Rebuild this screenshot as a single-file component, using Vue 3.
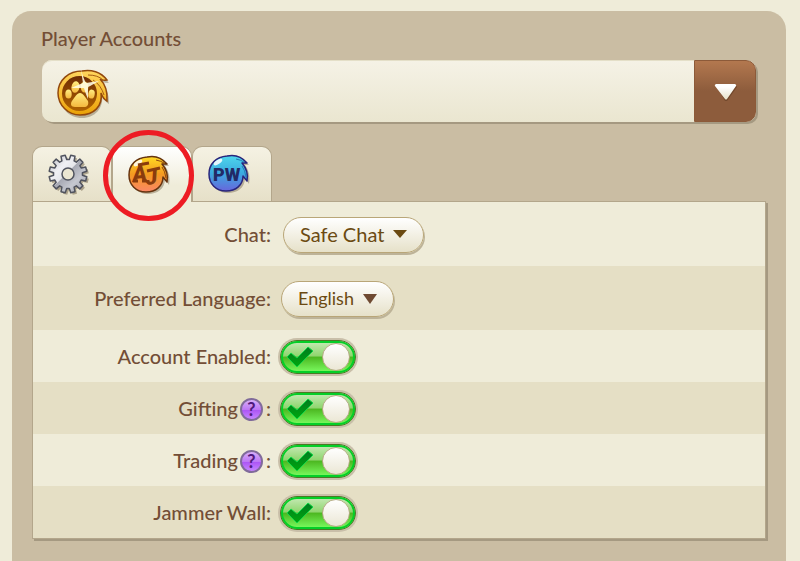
<script setup>
import { ref, reactive } from 'vue'

const activeTab = ref('aj')
const chat = ref('Safe Chat')
const language = ref('English')

const toggles = reactive([
  { id: 'enabled', label: 'Account Enabled', help: false, on: true },
  { id: 'gifting', label: 'Gifting', help: true, on: true },
  { id: 'trading', label: 'Trading', help: true, on: true },
  { id: 'wall', label: 'Jammer Wall', help: false, on: true }
])

function gearPath(cx, cy, outer, inner, teeth) {
  const step = (Math.PI * 2) / teeth
  const shape = [[-0.33, inner], [-0.22, outer], [0.22, outer], [0.33, inner]]
  const points = []
  for (let i = 0; i < teeth; i++) {
    for (const [offset, r] of shape) {
      const a = (i + 0.5 + offset) * step
      points.push(`${(cx + Math.cos(a) * r).toFixed(2)} ${(cy + Math.sin(a) * r).toFixed(2)}`)
    }
  }
  return `M${points.join('L')}Z`
}
const gear = gearPath(21, 22, 19, 14.5, 12)
</script>

<template>
  <main class="panel">
    <h1 class="title">Player Accounts</h1>

    <div class="account">
      <svg class="paw" width="54" height="52" viewBox="0 0 54 52" role="img" aria-label="Paw badge">
        <defs>
          <linearGradient id="pawRing" x1="0" y1="0" x2="0" y2="1">
            <stop offset="0" stop-color="#ffd55e" />
            <stop offset=".6" stop-color="#f6b92c" />
            <stop offset="1" stop-color="#e9a005" />
          </linearGradient>
          <linearGradient id="pawCore" x1="0" y1="0" x2="0" y2="1">
            <stop offset="0" stop-color="#6f2c04" />
            <stop offset="1" stop-color="#b06300" />
          </linearGradient>
          <linearGradient id="pawPad" x1="0" y1="0" x2="0" y2="1">
            <stop offset="0" stop-color="#ffed82" />
            <stop offset="1" stop-color="#f5b83e" />
          </linearGradient>
        </defs>
        <path d="M25 3C34 1 44 4 51 13Q47 13 44 12Q51 19 51 34Q47 32 44 25C46 38 37 48 24 48C11 48 2 38 2 25.500C2 12 12 3 25 3Z" fill="#776b51" opacity=".45" transform="translate(1 2)" />
        <path d="M25 3C34 1 44 4 50 12Q46 13 43 11Q51 19 50 33Q46 31 44 25C46 38 37 47 23 47C11 47 1 37 1 25C1 12 12 3 25 3Z" fill="url(#pawRing)" stroke="#92480c" stroke-width="1.500" />
        <circle cx="22.500" cy="25.500" r="17.500" fill="url(#pawCore)" />
        <path d="M31 7Q41 7 46 12M36 12Q44 17 47 27" fill="none" stroke="#a45b12" stroke-width="1" />
        <ellipse cx="11.500" cy="26" rx="3.200" ry="4.500" fill="url(#pawPad)" />
        <ellipse cx="18.500" cy="19" rx="4" ry="5.800" transform="rotate(10 18 19)" fill="url(#pawPad)" />
        <ellipse cx="27.500" cy="19" rx="3.800" ry="5.500" fill="url(#pawPad)" />
        <ellipse cx="34.500" cy="26" rx="3.200" ry="4.500" transform="rotate(10 34 26)" fill="url(#pawPad)" />
        <path d="M23 25C26 25 28 29 31 33C32 37 30 39 27 39H18C14 39 13 36 15 33C18 29 20 25 23 25Z" fill="url(#pawPad)" />
        <path d="M24 2Q27 12 29 15Q35 14 42 13Q35 17 31 19Q31 25 31 31Q28 24 27 20Q21 20 14 20Q21 17 26 15Q25 9 24 2Z" fill="#fffbe0" opacity=".9" />
      </svg>
      <button class="account-open" type="button" aria-label="Choose player account">
        <svg width="24" height="20" viewBox="0 0 24 20" aria-hidden="true">
          <defs>
            <linearGradient id="downFill" x1="0" y1="0" x2="0" y2="1">
              <stop offset=".2" stop-color="#fff" />
              <stop offset="1" stop-color="#e7e2c9" />
            </linearGradient>
          </defs>
          <path d="M3 4H23L24 6L14 20H12Z" fill="#633c23" opacity=".6" />
          <path d="M3 3H22Q24 4 23 5L14 18Q13 19 12 18L2 5Q1 4 3 3Z" fill="url(#downFill)" />
        </svg>
      </button>
    </div>

    <nav class="tabs" role="tablist" aria-label="Account sections">
      <button class="tab" type="button" role="tab" aria-label="General settings" :aria-selected="activeTab === 'gear'" :class="{ active: activeTab === 'gear' }" @click="activeTab = 'gear'">
        <svg width="44" height="44" viewBox="0 0 44 44" aria-hidden="true">
          <defs>
            <linearGradient id="gearFill" x1="0" y1="0" x2="1" y2="1">
              <stop offset="0" stop-color="#b7b8bf" />
              <stop offset=".32" stop-color="#f0f0f4" />
              <stop offset=".47" stop-color="#e5e6eb" />
              <stop offset=".48" stop-color="#a6a8b3" />
              <stop offset=".7" stop-color="#c6c8d0" />
              <stop offset="1" stop-color="#9799a5" />
            </linearGradient>
          </defs>
          <path :d="gear" fill="#91866e" opacity=".7" transform="translate(2 2)" />
          <path :d="gear" fill="url(#gearFill)" stroke="#50535e" stroke-width="1.500" stroke-linejoin="round" />
          <circle cx="21" cy="22" r="6" fill="#ebe6d2" stroke="#50535e" stroke-width="1.500" />
        </svg>
      </button>
      <button class="tab" type="button" role="tab" aria-label="AJ settings" :aria-selected="activeTab === 'aj'" :class="{ active: activeTab === 'aj' }" @click="activeTab = 'aj'">
        <svg width="44" height="44" viewBox="0 0 44 44" aria-hidden="true">
          <defs>
            <linearGradient id="ajFill" x1="0" y1="0" x2="0" y2="1">
              <stop offset="0" stop-color="#ffda23" />
              <stop offset=".5" stop-color="#f49a20" />
              <stop offset="1" stop-color="#fa8667" />
            </linearGradient>
          </defs>
          <path d="M20 4C29 2 36 5 41 12L37 12Q43 20 41 31L37 25C37 35 29 40 20 40C10 40 2 33 2 23C2 12 9 5 20 4Z" fill="#83785d" opacity=".5" transform="translate(1 1)" />
          <path d="M20 4C29 2 35 5 40 11L35 11Q42 19 40 29L36 24C36 33 29 39 19 39C9 39 2 32 2 22C2 12 9 5 20 4Z" fill="url(#ajFill)" stroke="#65330f" stroke-width="1.500" stroke-linejoin="round" />
          <path d="M29 7Q34 8 37 10M35 14Q38 18 39 25" fill="none" stroke="#8c4411" stroke-width="1" />
          <ellipse cx="11" cy="10" rx="5" ry="2" transform="rotate(-35 11 10)" fill="#fff" opacity=".85" />
          <g class="aj-letters">
            <text x="6" y="29" transform="rotate(-6 6 29)">A</text>
            <text x="19" y="32" transform="rotate(-6 19 32)">J</text>
          </g>
          <path d="M11 12L22 10M20 18L33 15M6 28L11 28M15 28L20 28" stroke="#8a3c0d" stroke-width="3" />
        </svg>
        <span class="ring"></span>
      </button>
      <button class="tab" type="button" role="tab" aria-label="PW settings" :aria-selected="activeTab === 'pw'" :class="{ active: activeTab === 'pw' }" @click="activeTab = 'pw'">
        <svg width="44" height="44" viewBox="0 0 44 44" aria-hidden="true">
          <defs>
            <linearGradient id="pwFill" x1="0" y1="0" x2="0" y2="1">
              <stop offset="0" stop-color="#4ed8ec" />
              <stop offset=".5" stop-color="#3baae0" />
              <stop offset="1" stop-color="#6866dc" />
            </linearGradient>
          </defs>
          <path d="M20 4C29 2 36 5 41 12L37 12Q43 20 41 31L37 25C37 35 29 40 20 40C10 40 2 33 2 23C2 12 9 5 20 4Z" fill="#83785d" opacity=".5" transform="translate(1 1)" />
          <path d="M20 4C29 2 35 5 40 11L35 11Q42 19 40 29L36 24C36 33 29 39 19 39C9 39 2 32 2 22C2 12 9 5 20 4Z" fill="url(#pwFill)" stroke="#29257b" stroke-width="1.500" stroke-linejoin="round" />
          <path d="M29 7Q34 8 37 10M35 14Q38 18 39 25" fill="none" stroke="#2579b5" stroke-width="1" />
          <ellipse cx="11" cy="10" rx="5" ry="2" transform="rotate(-35 11 10)" fill="#fff" opacity=".85" />
          <text class="pw-letters" x="6" y="29">PW</text>
        </svg>
      </button>
    </nav>

    <form class="settings" @submit.prevent>
      <div class="row tall">
        <div class="label"><label for="chat">Chat:</label></div>
        <div class="pick chat">
          <select id="chat" v-model="chat">
            <option>Safe Chat</option>
            <option>Free Chat</option>
          </select>
          <svg class="caret" width="14" height="8" viewBox="0 0 14 8" aria-hidden="true"><path d="M0 0H14L7 8Z" fill="#6b4a12" /></svg>
        </div>
      </div>
      <div class="row tall">
        <div class="label"><label for="language">Preferred Language:</label></div>
        <div class="pick language">
          <select id="language" v-model="language">
            <option>English</option>
            <option>Español</option>
          </select>
          <svg class="caret" width="14" height="10" viewBox="0 0 14 10" aria-hidden="true"><path d="M0 0H14L7 10Z" fill="#6f4a32" /></svg>
        </div>
      </div>
      <div v-for="item in toggles" :key="item.id" class="row">
        <div class="label">
          <label :for="item.id">{{ item.label }}<template v-if="!item.help">:</template></label>
          <template v-if="item.help">
            <button class="help" type="button" :aria-label="'About ' + item.label">?</button><span class="colon">:</span>
          </template>
        </div>
        <div class="toggle">
          <input :id="item.id" v-model="item.on" type="checkbox" />
          <svg v-if="item.on" class="tick" width="28" height="22" viewBox="0 0 28 22" aria-hidden="true">
            <defs>
              <linearGradient id="tickFill" x1="0" y1="0" x2="0" y2="1">
                <stop offset="0" stop-color="#007c20" />
                <stop offset="1" stop-color="#00a80d" />
              </linearGradient>
            </defs>
            <path d="M1 11L5 7L11 12L22 1L27 5L11 21Z" fill="url(#tickFill)" stroke="#12d848" stroke-width="1" />
          </svg>
        </div>
      </div>
    </form>
  </main>
</template>

<style>
body {
  background: #efecd9;
}
</style>

<style scoped>
.panel {
  box-sizing: border-box;
  min-height: calc(100vh - 11px);
  margin: 11px 14px 0 12px;
  padding: 15px 20px 20px;
  border-radius: 19px 19px 0 0;
  background: #cabda3;
  color: #734e36;
  font-family: Lato, "Open Sans", sans-serif;
  font-size: 20px;
  line-height: 24px;
}

.title {
  margin: 0 9px 10px;
  font-size: 20px;
  font-weight: 500;
  line-height: 24px;
}

.account {
  display: flex;
  align-items: center;
  justify-content: space-between;
  height: 62px;
  margin: 0 10px 24px;
  border-radius: 10px;
  background: linear-gradient(#f5f2e6, #eae6d0);
  box-shadow: 2px 2px 0 #a59981, inset 0 1px 0 #e4dfc8;
}

.paw {
  margin: 6px 0 0 15px;
}

.account-open {
  display: flex;
  align-items: center;
  justify-content: center;
  width: 62px;
  height: 62px;
  padding: 0;
  border: 1px solid #8c5a39;
  border-radius: 0 10px 10px 0;
  background: linear-gradient(#b3784f, #8d5c3c 50%, #8d5c3c);
}

.tabs {
  display: flex;
}

.tab {
  position: relative;
  display: flex;
  align-items: center;
  justify-content: center;
  width: 80px;
  height: 55px;
  padding: 0 7px 0 0;
  border: 1px solid #b3a68b;
  border-bottom: 0;
  border-radius: 10px 10px 0 0;
  background: linear-gradient(#f5f2e3, #e6e0c8);
}

.tab.active {
  z-index: 1;
  height: 56px;
  margin-bottom: -1px;
  background: linear-gradient(#ffffff, #efecd9 70%);
}

.ring {
  position: absolute;
  top: -17px;
  left: -10px;
  box-sizing: border-box;
  width: 91px;
  height: 91px;
  border: 5px solid #ed1c24;
  border-radius: 50%;
  pointer-events: none;
}

.aj-letters {
  fill: #8a3c0d;
  font-family: Roboto, sans-serif;
  font-size: 22px;
  font-style: italic;
  font-weight: 900;
}

.pw-letters {
  fill: #222a66;
  font-family: Roboto, sans-serif;
  font-size: 18px;
  font-weight: 900;
}

.settings {
  border: 1px solid #b3a68b;
  background: #efecd9;
  box-shadow: 2px 2px 0 #a59981;
}

.row {
  display: grid;
  grid-template-columns: 238px 1fr;
  align-items: center;
  column-gap: 8px;
  box-sizing: border-box;
  height: 52px;
  padding-top: 2px;
}

.row.tall {
  height: 64px;
}

.row:nth-child(even) {
  background: #e5dfc5;
}

.label {
  display: flex;
  align-items: center;
  justify-content: flex-end;
  font-weight: 500;
}

.label label,
.colon {
  padding-bottom: 2px;
}

.help {
  width: 23px;
  height: 23px;
  margin-left: 2px;
  padding: 0;
  border: 2px solid #806b9a;
  border-radius: 50%;
  background: linear-gradient(#d7adfa, #bd78f5 50%, #ab52f4 50%, #c584ff);
  color: #51197d;
  font-family: Lato, sans-serif;
  font-size: 18px;
  font-weight: 700;
  line-height: 18px;
}

.colon {
  margin-left: 3px;
}

.pick {
  position: relative;
  justify-self: start;
}

.pick select {
  appearance: none;
  box-sizing: border-box;
  height: 36px;
  padding: 0 16px 2px;
  border: 1px solid #b9a678;
  border-radius: 18px;
  background: linear-gradient(#ffffff, #e6e1c9);
  box-shadow: 1px 2px 0 #bdb398;
  color: #6b4a12;
  font-family: inherit;
  font-size: 20px;
}

.pick.chat {
  margin-left: 4px;
}

.chat select {
  width: 141px;
}

.pick.language {
  margin-left: 2px;
}

.language select {
  width: 113px;
  font-size: 18px;
}

.caret {
  position: absolute;
  top: 13px;
  right: 17px;
  pointer-events: none;
}

.toggle {
  position: relative;
  justify-self: start;
}

.toggle input {
  appearance: none;
  display: flex;
  align-items: center;
  justify-content: flex-start;
  box-sizing: border-box;
  width: 76px;
  height: 34px;
  margin: 0 1px;
  padding: 0 5px;
  border: 1px solid #4a7a24;
  border-radius: 17px;
  background: #c9c2ae;
  box-shadow: 0 0 0 2px #c9bfa9;
}

.toggle input:checked {
  justify-content: flex-end;
  background: linear-gradient(#c8eab8, #8dd56c 48%, #4bb51f 49%, #7dff63);
  box-shadow: 0 0 0 2px #c9bfa9, inset 0 0 0 2px #04cf28;
}

.toggle input::after {
  content: "";
  box-sizing: border-box;
  width: 28px;
  height: 28px;
  border: 1px solid #b5aa83;
  border-radius: 50%;
  background: linear-gradient(#ffffff, #ebe7d5);
}

.tick {
  position: absolute;
  top: 6px;
  left: 7px;
  pointer-events: none;
}
</style>
